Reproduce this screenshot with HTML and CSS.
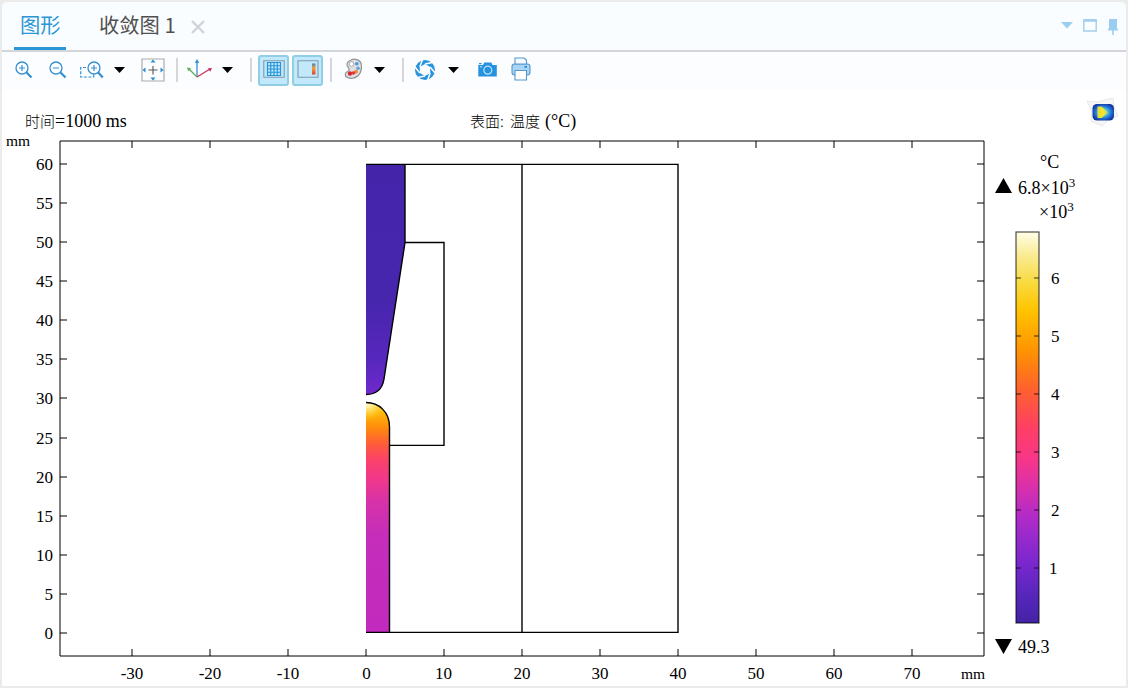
FILE: index.html
```html
<!DOCTYPE html>
<html lang="zh-CN">
<head>
  <meta charset="UTF-8" />
  <meta name="viewport" content="width=device-width, initial-scale=1.0" />
  <title>图形</title>
  <link rel="stylesheet" href="styles.css">
</head>
<body>
  <div class="panel">
    <header class="tabs">
      <div class="tab active">图形</div>
      <div class="tab second">收敛图 1</div>
      <svg class="close" width="14" height="14" viewBox="0 0 14 14"><path d="M1 1L13 13M13 1L1 13" stroke="#d0d2dd" stroke-width="2.4"/></svg>
      <div class="window-tools">
        <svg width="12" height="7" viewBox="0 0 12 7"><path d="M0 0h12L6 6.500z" fill="#9bcdf0"/></svg>
        <svg width="14" height="13" viewBox="0 0 14 13"><path d="M.8 1h12.400v11H.8z" fill="none" stroke="#a3cdec" stroke-width="1.400"/><path d="M.5 1.500h13" stroke="#a3cdec" stroke-width="2.600"/></svg>
        <svg class="pin" width="12" height="16" viewBox="0 0 12 16"><path d="M2 0h8v9l1.500 2.500H6.800V16H5.200v-4.500H.5L2 9z" fill="#9bcdf0"/></svg>
      </div>
    </header>

    <nav class="toolbar">
      <svg class="zoom-in" width="18" height="18" viewBox="0 0 18 18" fill="none" stroke="#368fd0">
        <circle cx="7" cy="7" r="6" stroke-width="1.300"/><path d="M4 7h6M7 4v6" stroke-width="1.200"/><path d="M11.300 11.300L16.500 16.500" stroke-width="2.200"/>
      </svg>
      <svg class="zoom-out" width="18" height="18" viewBox="0 0 18 18" fill="none" stroke="#368fd0">
        <circle cx="7" cy="7" r="6" stroke-width="1.300"/><path d="M4 7h6" stroke-width="1.200"/><path d="M11.300 11.300L16.500 16.500" stroke-width="2.200"/>
      </svg>
      <svg class="zoom-box" width="24" height="18" viewBox="0 0 24 18" fill="none" stroke="#368fd0">
        <path d="M6 6.500H.7V16h13V13" stroke-width="1.200" stroke-dasharray="3 1.500"/>
        <circle cx="14" cy="7" r="6" stroke-width="1.300"/><path d="M11 7h6M14 4v6" stroke-width="1.200"/><path d="M18 11.300L22.800 16.500" stroke-width="2.200"/>
      </svg>
      <svg class="caret c1" width="11" height="6" viewBox="0 0 11 6"><path d="M0 0h11L5.500 6z"/></svg>
      <svg class="fit" width="24" height="24" viewBox="0 0 24 24">
        <path d="M1 1h22v22H1z" fill="none" stroke="#a9acb0" stroke-width="1.200"/>
        <path d="M12 8v8.500M7.500 12h9" stroke="#555" stroke-width="1.100"/>
        <path d="M12 1.500l2.500 3h-5zM12 22.500l2.500-3h-5zM1.500 12l3-2.500v5zM22.500 12l-3-2.500v5z" fill="#268ad0"/>
      </svg>
      <span class="sep s1"></span>
      <svg class="axes" width="26" height="20" viewBox="0 0 26 20" fill="none" stroke-width="1.300">
        <path d="M10 18V2" stroke="#368fd0"/><path d="M10 18L2 10" stroke="#5caf50"/><path d="M10 18L23 10" stroke="#c92d5c"/>
        <path d="M10 0l2.200 4H7.800z" fill="#368fd0"/><path d="M0 8.500l4 .8-2.800 3z" fill="#5caf50"/><path d="M25 9l-4 .2 2.200 3.500z" fill="#c92d5c"/>
      </svg>
      <svg class="caret c2" width="11" height="6" viewBox="0 0 11 6"><path d="M0 0h11L5.500 6z"/></svg>
      <span class="sep s2"></span>
      <span class="toggle t1">
        <svg width="22" height="18" viewBox="0 0 22 18" fill="none">
          <path d="M.8.8h20.400v16.400H.8z" stroke="#7d9bab" stroke-width="1.100"/>
          <path d="M4.500 2.500h13v13h-13zM7.750 2.500v13M11 2.500v13M14.250 2.500v13M4.500 5.750h13M4.500 9h13M4.500 12.250h13" stroke="#2594d8" stroke-width="1.200"/>
        </svg>
      </span>
      <span class="toggle t2">
        <svg width="22" height="18" viewBox="0 0 22 18">
          <defs><linearGradient id="mini" x2="0" y2="1"><stop offset="0" stop-color="#3f83b5"/><stop offset=".4" stop-color="#f5a13b"/><stop offset="1" stop-color="#d84430"/></linearGradient></defs>
          <path d="M1 .8h20v16.400H1z" fill="none" stroke="#7d9bab" stroke-width="1.100"/>
          <path d="M15 3.500h3.500v11H15z" fill="url(#mini)"/>
        </svg>
      </span>
      <span class="sep s3"></span>
      <svg class="palette" width="19" height="22" viewBox="0 0 19 22">
        <path d="M7 2C10 .5 16 1 17.300 6c1.200 6-1.500 13-8.300 14.200-4 .6-8-1-7.800-4 .2-3 4-2.400 4-4.700C5 9.500 3 9 3 6.500 3 4.300 5 2.800 7 2z" fill="#dedfe2" stroke="#909399" stroke-width="1.200"/>
        <circle cx="7.500" cy="6" r="2.300" fill="#fff" stroke="#999" stroke-width=".8"/>
        <circle cx="12.800" cy="5.800" r="1.800" fill="#4799d9"/><circle cx="14" cy="10.300" r="1.800" fill="#61a5d3"/>
        <circle cx="12" cy="13.800" r="2" fill="#ef8936"/><circle cx="6" cy="15.500" r="2.200" fill="#d82932"/><circle cx="9.300" cy="15" r="1.800" fill="#de3537"/>
      </svg>
      <svg class="caret c3" width="11" height="6" viewBox="0 0 11 6"><path d="M0 0h11L5.500 6z"/></svg>
      <span class="sep s4"></span>
      <svg class="shutter" width="22" height="22" viewBox="0 0 22 22">
        <circle cx="11" cy="11" r="10" fill="#2993df"/>
        <path d="M11 5l5.200 3v6L11 17l-5.200-3V8z" fill="#fbfdff"/>
        <path d="M11 5L18.500 3.500M16.200 8L21 14M16.200 14L13.500 21.500M11 17L3.500 18.500M5.800 14L1 8M5.800 8L8.500 .5" stroke="#fbfdff" stroke-width="1.500"/>
      </svg>
      <svg class="caret c4" width="11" height="6" viewBox="0 0 11 6"><path d="M0 0h11L5.500 6z"/></svg>
      <svg class="camera" width="19" height="15" viewBox="0 0 19 15">
        <path d="M.3 3H5l1.300-2.500h7L14.500 3h4.300v11.500H.3z" fill="#2692df"/><path d="M1 1h2.500v1.200H1z" fill="#2692df"/>
        <circle cx="9.800" cy="8.200" r="4" fill="#2692df" stroke="#b8e2fa" stroke-width="1.200"/><path d="M2 4.800h2" stroke="#d8effc"/>
      </svg>
      <svg class="printer" width="20" height="24" viewBox="0 0 20 24" stroke="#5598cc" stroke-width="1.100">
        <rect x="1" y="7" width="18" height="11" rx="2.500" fill="#a9d4f5"/>
        <path d="M4 7V1h9l2.500 2v4z" fill="#f4faff"/><path d="M4 13.500h11.500V23H4z" fill="#fff"/>
        <path d="M13.500 9.800h2.500" stroke="#2488d2" stroke-width="1.800"/>
      </svg>
    </nav>

    <svg class="plot" width="1124" height="596" viewBox="2 90 1124 596">
      <defs>
        <linearGradient id="bar" x2="0" y2="1">
          <stop offset="0" stop-color="#fffde8"/><stop offset=".06" stop-color="#faeb93"/><stop offset=".13" stop-color="#f9da3e"/>
          <stop offset=".2" stop-color="#ffc400"/><stop offset=".3" stop-color="#ff9500"/><stop offset=".4" stop-color="#ff622c"/>
          <stop offset=".5" stop-color="#ff3f64"/><stop offset=".58" stop-color="#f83688"/><stop offset=".65" stop-color="#da30aa"/>
          <stop offset=".73" stop-color="#b02bc9"/><stop offset=".84" stop-color="#7d27cf"/><stop offset=".93" stop-color="#5626bb"/><stop offset="1" stop-color="#4323a5"/>
        </linearGradient>
        <linearGradient id="cathode" gradientUnits="userSpaceOnUse" x1="0" y1="164" x2="0" y2="395">
          <stop offset="0" stop-color="#4425aa"/><stop offset=".6" stop-color="#4726ae"/><stop offset=".85" stop-color="#5727bd"/><stop offset="1" stop-color="#7029cd"/>
        </linearGradient>
        <linearGradient id="anode" gradientUnits="userSpaceOnUse" x1="0" y1="402" x2="0" y2="633">
          <stop offset="0" stop-color="#ffd83a"/><stop offset=".05" stop-color="#ffb508"/><stop offset=".11" stop-color="#ff8c0c"/>
          <stop offset=".18" stop-color="#ff5d38"/><stop offset=".25" stop-color="#fb416a"/><stop offset=".33" stop-color="#f23889"/>
          <stop offset=".43" stop-color="#d732a8"/><stop offset=".58" stop-color="#c52dba"/><stop offset="1" stop-color="#c12abd"/>
        </linearGradient>
        <radialGradient id="glow" gradientUnits="userSpaceOnUse" cx="367" cy="402" r="19">
          <stop offset="0" stop-color="#fffce0"/><stop offset=".3" stop-color="#fff3a5" stop-opacity=".85"/><stop offset="1" stop-color="#ffc91e" stop-opacity="0"/>
        </radialGradient>
        <radialGradient id="logo" cx=".5" cy=".5" r=".55"><stop offset="0" stop-color="#a5e29a"/><stop offset=".4" stop-color="#48b9e2"/><stop offset=".75" stop-color="#1c62cc"/><stop offset="1" stop-color="#12369f"/></radialGradient>
        <linearGradient id="play"><stop offset="0" stop-color="#e3dc35"/><stop offset=".6" stop-color="#f6e42c"/><stop offset="1" stop-color="#9fd98a"/></linearGradient>
      </defs>

      <text class="cjk" x="25" y="127">时间</text>
      <text class="title" x="55" y="127">=1000 ms</text>
      <text class="cjk" x="470" y="127">表面:</text>
      <text class="cjk" x="510" y="127">温度</text>
      <text class="title" x="545" y="127">(°C)</text>

      <!-- software badge -->
      <path d="M1087 101l10 1 16-4 1 9 4 9-9 3-7 7-11-5 1-9z" fill="#f6f5f7" stroke="#e9e7ea"/>
      <rect x="1092.500" y="104" width="21.500" height="16.500" rx="4.500" fill="url(#logo)"/>
      <path d="M1097.500 106.500h4l6.500 6-6.500 5.500h-4z" fill="url(#play)"/>

      <path class="frame" d="M60 141H984V656H60z"/>
      <path class="frame" d="M132 141v7M210 141v7M288 141v7M366 141v7M444 141v7M522 141v7M600 141v7M678 141v7M756 141v7M834 141v7M912 141v7M132 656v-7M210 656v-7M288 656v-7M366 656v-7M444 656v-7M522 656v-7M600 656v-7M678 656v-7M756 656v-7M834 656v-7M912 656v-7"/>
      <path class="frame" d="M60 164h7M60 203h7M60 242h7M60 281h7M60 320h7M60 359h7M60 398h7M60 438h7M60 477h7M60 516h7M60 555h7M60 594h7M60 633h7M984 164h-7M984 203h-7M984 242h-7M984 281h-7M984 320h-7M984 359h-7M984 398h-7M984 438h-7M984 477h-7M984 516h-7M984 555h-7M984 594h-7M984 633h-7"/>

      <text class="unit" x="6" y="146">mm</text>
      <text class="unit" x="961" y="679">mm</text>
      <g text-anchor="end">
        <text x="53" y="170">60</text><text x="53" y="209">55</text><text x="53" y="248">50</text><text x="53" y="287">45</text>
        <text x="53" y="326">40</text><text x="53" y="365">35</text><text x="53" y="404">30</text><text x="53" y="444">25</text>
        <text x="53" y="483">20</text><text x="53" y="522">15</text><text x="53" y="561">10</text><text x="53" y="600">5</text><text x="53" y="639">0</text>
      </g>
      <g text-anchor="middle">
        <text x="132" y="679">-30</text><text x="210" y="679">-20</text><text x="288" y="679">-10</text><text x="366.500" y="679">0</text>
        <text x="443.500" y="679">10</text><text x="522" y="679">20</text><text x="600" y="679">30</text><text x="678" y="679">40</text>
        <text x="756" y="679">50</text><text x="834" y="679">60</text><text x="912" y="679">70</text>
      </g>

      <!-- electrodes and domain edges -->
      <path d="M366 164H405V242L384 379Q381.500 394.500 366 394.500z" fill="url(#cathode)"/>
      <path d="M366 402.500C379 402.500 389.500 412 389.500 427V632.500H366z" fill="url(#anode)"/>
      <path d="M366 402.500C379 402.500 389.500 412 389.500 427H366z" fill="url(#glow)"/>
      <path class="edge" d="M366 164.400H678V632.400H366M522 164V632M405 164V242.500L384 379Q381.500 394.500 366 394.500M405 242.500H444V445.400H389.500M366 402.500C379 402.500 389.500 412 389.500 427V632"/>

      <text class="title" x="1040" y="168">°C</text>
      <path d="M1003.500 178L1012 193H995zM1003.500 654L1012 639H995z"/>
      <text class="title" x="1018" y="194">6.8×10<tspan class="sup" dy="-7">3</tspan></text>
      <text class="title" x="1039" y="218">×10<tspan class="sup" dy="-7">3</tspan></text>
      <rect x="1016" y="232" width="23" height="391" fill="url(#bar)" stroke="#000" stroke-opacity=".7" stroke-width="1.200"/>
      <path class="mark" d="M1016 278h5M1034 278h5M1016 336h5M1034 336h5M1016 394h5M1034 394h5M1016 452h5M1034 452h5M1016 510h5M1034 510h5M1016 568h5M1034 568h5"/>
      <text x="1051" y="284">6</text><text x="1051" y="342">5</text><text x="1051" y="400">4</text>
      <text x="1051" y="458">3</text><text x="1051" y="516">2</text><text x="1049" y="574">1</text>
      <text class="title" x="1018" y="653">49.3</text>
    </svg>
  </div>
</body>
</html>
```
FILE: styles.css
```css
* {
  box-sizing: border-box;
}

body {
  margin: 0;
  padding: 2px;
  width: 1128px;
  height: 688px;
  background: #ebebeb;
  overflow: hidden;
  font-family: "Noto Sans CJK SC", sans-serif;
}

.panel {
  height: 684px;
  background: #fff;
  border-radius: 5px 5px 0 0;
  overflow: hidden;
}

.tabs {
  display: flex;
  height: 50px;
  padding-left: 12px;
  padding-right: 6px;
  background: #fafdff;
  border-bottom: 2px solid #d3d5d8;
}

.tab {
  height: 48px;
  font-size: 20.300px;
  line-height: 44px;
  font-weight: 400;
  color: #505050;
  white-space: nowrap;
}

.active {
  width: 52px;
  padding-left: 6px;
  color: #2a96d6;
  border-bottom: 3px solid #2a96d6;
}

.second {
  width: 77px;
  margin-left: 33px;
}

.close {
  margin: 18px 0 0 15px;
}

.window-tools {
  display: flex;
  align-items: center;
  gap: 10px;
  height: 47px;
  margin-left: auto;
}

.window-tools svg {
  margin-right: -1px;
  margin-left: -1px;
  transform: translateX(-1px);
}

.window-tools {
  gap: 12px;
}

.window-tools .pin {
  margin-top: 3px;
  margin-right: 0;
}

.toolbar {
  display: flex;
  align-items: center;
  height: 38px;
  padding-left: 13px;
  background: #fbfdff;
}

.toolbar > * {
  flex: none;
}

.zoom-in, .zoom-out, .zoom-box {
  margin-bottom: 3px;
}

.zoom-out {
  margin-left: 16px;
}

.zoom-box {
  margin-left: 13px;
}

.caret {
  margin-left: 10px;
  margin-bottom: 2px;
}

.fit {
  margin-left: 16px;
  margin-bottom: 3px;
}

.sep {
  width: 2px;
  height: 24px;
  margin-bottom: 3px;
  background: #d4d6d9;
}

.s1 {
  margin-left: 11px;
}

.axes {
  margin-left: 9px;
  margin-bottom: 4px;
}

.c2 {
  margin-left: 9px;
}

.s2 {
  margin-left: 17px;
}

.toggle {
  display: flex;
  align-items: center;
  justify-content: center;
  width: 31px;
  height: 31px;
  margin-bottom: 2px;
  padding-bottom: 2px;
  background: #c2e8fc;
  border: 2px solid #92cde6;
  border-radius: 3px;
}

.t1 {
  margin-left: 6px;
}

.t2 {
  margin-left: 3px;
}

.s3 {
  margin-left: 7px;
}

.palette {
  margin-left: 12px;
  margin-bottom: 4px;
}

.c3 {
  margin-left: 11px;
}

.s4 {
  margin-left: 17px;
}

.shutter {
  margin-left: 10px;
  margin-bottom: 2px;
}

.c4 {
  margin-left: 12px;
}

.camera {
  margin-left: 19px;
  margin-bottom: 4px;
}

.printer {
  margin-left: 14px;
  margin-bottom: 4px;
}

.plot {
  display: block;
}

.plot text {
  font-family: "Liberation Serif", serif;
  font-size: 17px;
  fill: #000;
}

.plot .title {
  font-size: 18px;
}

.plot .cjk {
  font-family: "Noto Sans CJK SC", sans-serif;
  font-size: 15px;
  font-weight: 300;
}

.plot .unit {
  font-size: 15.500px;
}

.plot .sup {
  font-size: 13px;
}

.frame {
  fill: none;
  stroke: #000;
  stroke-width: 1;
}

.edge {
  fill: none;
  stroke: #000;
  stroke-width: 1.400;
}

.mark {
  stroke: #000;
  stroke-opacity: 0.750;
  stroke-width: 1.200;
}
```
